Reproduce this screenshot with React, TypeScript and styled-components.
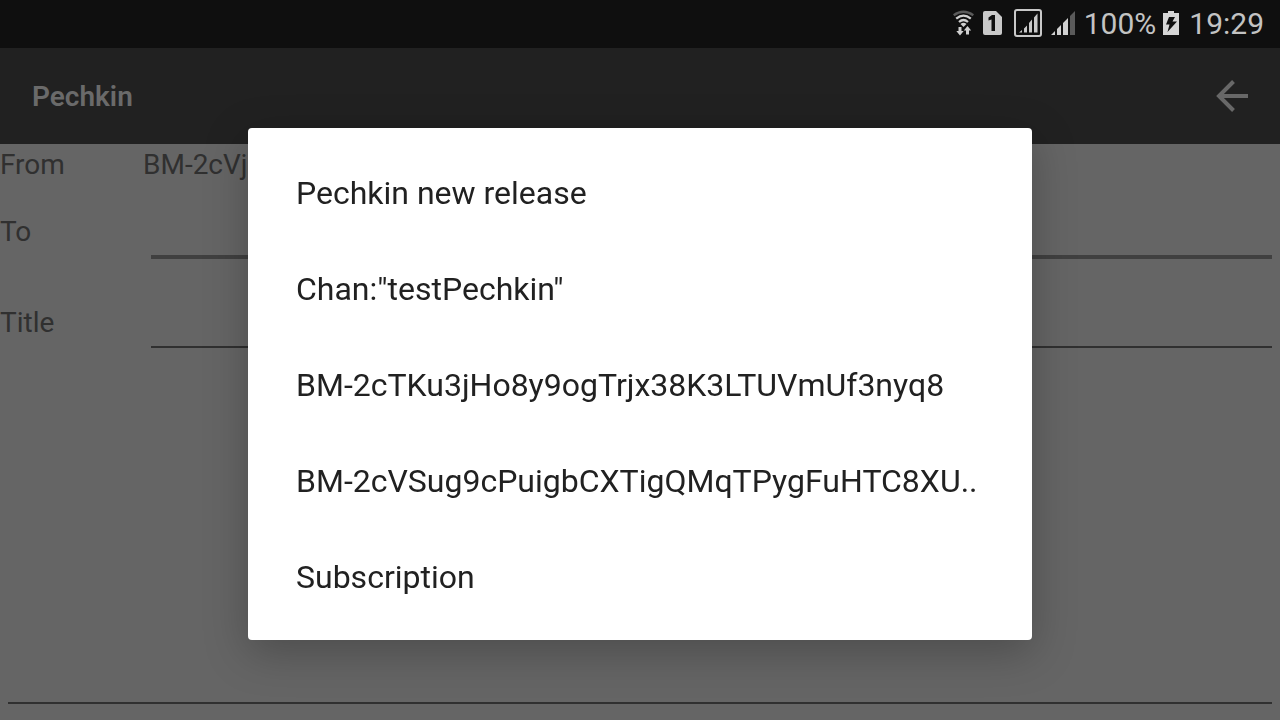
import React from "react";
import styled, { createGlobalStyle } from "styled-components";

const GlobalStyle = createGlobalStyle`
  * { box-sizing: border-box; }
  body { margin: 0; font-family: Roboto, sans-serif; background: #656565; }
`;

const Screen = styled.div`
  display: flex;
  flex-direction: column;
  min-height: 100vh;
`;

const StatusBar = styled.div`
  display: flex;
  align-items: center;
  justify-content: flex-end;
  height: 48px;
  padding: 0 16px 2px;
  background: #0f0f0f;
  color: #c3c3c3;
  font-size: 30px;
  line-height: 40px;
`;

const StatusIcon = styled.svg<{ $gap: number }>`
  flex: none;
  display: block;
  margin-right: ${(p) => p.$gap}px;
`;

const StatusText = styled.span<{ $gap?: number }>`
  margin-right: ${(p) => p.$gap ?? 0}px;
  padding-top: 2px;
`;

const Toolbar = styled.header`
  display: flex;
  align-items: center;
  justify-content: space-between;
  height: 96px;
  padding: 0 24px 0 32px;
  background: #212121;
`;

const Heading = styled.h1`
  margin: 0;
  padding-top: 2px;
  color: #6a6a6a;
  font-size: 28px;
  font-weight: 600;
  line-height: 40px;
`;

const BackButton = styled.button`
  display: flex;
  padding: 0;
  border: 0;
  background: none;
  cursor: pointer;
`;

const Form = styled.form`
  display: flex;
  flex: 1;
  flex-direction: column;
  color: #303030;
  font-size: 28px;
`;

const Row = styled.div`
  display: flex;
  align-items: center;
  height: 91px;
`;

const SenderRow = styled(Row)`
  height: 42px;
  padding-bottom: 2px;
`;

const Label = styled.label`
  flex: none;
  width: 143px;
`;

const LineInput = styled.input<{ $active?: boolean }>`
  flex: 1;
  align-self: stretch;
  min-width: 0;
  margin: 0 8px ${(p) => (p.$active ? 18 : 20)}px;
  padding: 0;
  border: 0;
  border-bottom: ${(p) => (p.$active ? "4px solid #404040" : "2px solid #303030")};
  outline: 0;
  background: none;
  color: inherit;
  font: inherit;
`;

const Message = styled.textarea`
  flex: 1;
  margin: 0 8px 16px;
  padding: 0;
  border: 0;
  border-bottom: 2px solid #303030;
  outline: 0;
  resize: none;
  background: none;
  color: inherit;
  font: inherit;
`;

const Overlay = styled.div`
  position: fixed;
  inset: 48px 0 0;
  display: flex;
  align-items: center;
  justify-content: center;
`;

const Dialog = styled.div`
  display: flex;
  flex-direction: column;
  width: 784px;
  max-width: calc(100% - 64px);
  padding: 16px 0;
  border-radius: 4px;
  background: #fff;
  box-shadow: 0 12px 44px rgba(0, 0, 0, 0.25);
`;

const Choice = styled.button`
  height: 96px;
  padding: 2px 48px 0;
  overflow: hidden;
  border: 0;
  background: none;
  color: #212121;
  font-family: inherit;
  font-size: 32px;
  line-height: 40px;
  text-align: left;
  white-space: nowrap;
  cursor: pointer;
`;

const choices = [
  "Pechkin new release",
  'Chan:"testPechkin"',
  "BM-2cTKu3jHo8y9ogTrjx38K3LTUVmUf3nyq8",
  "BM-2cVSug9cPuigbCXTigQMqTPygFuHTC8XU..",
  "Subscription",
];

const WifiIcon = () => (
  <StatusIcon $gap={9} width="21" height="26" viewBox="0 0 21 26" fill="none" aria-hidden="true">
    <path d="M.7 5.200Q10.500 -1.800 20.300 5.200" stroke="#5a5a5a" strokeWidth="2.400" />
    <path d="M3.200 8.700Q10.500 2.500 17.800 8.700M6 12Q10.500 8 15 12" stroke="#d0d0d0" strokeWidth="2.200" />
    <path d="M7.500 14Q10.500 11.500 13.500 14L10.500 17Z" fill="#d0d0d0" />
    <path d="M5.500 17h3v4h2.200L7 25.500l-3.700-4.500h2.200zM13 24.500h3v-4h2.200l-3.700-4.500-3.700 4.500H13z" fill="#d0d0d0" />
  </StatusIcon>
);

const SimIcon = () => (
  <StatusIcon $gap={12} width="19" height="24" viewBox="0 0 19 24" aria-hidden="true">
    <path d="M2 0h11l6 6v16a2 2 0 0 1-2 2H2a2 2 0 0 1-2-2V2a2 2 0 0 1 2-2z" fill="#c9c9c9" />
    <path d="M9 4h3v16H8.500V8.500L5.500 9.500V6.500z" fill="#0f0f0f" />
  </StatusIcon>
);

const BoxedSignalIcon = () => (
  <StatusIcon $gap={9} width="28" height="28" viewBox="0 0 28 28" aria-hidden="true">
    <rect x="1" y="1" width="26" height="26" rx="2" fill="none" stroke="#c9c9c9" strokeWidth="2" />
    <path d="M5 23.500L8 21v2.500zM10 19.500l3-3v7h-3zM15 14l3-3.500v13h-3zM20 8.500l3.500-4v19H20z" fill="#c9c9c9" />
  </StatusIcon>
);

const SignalIcon = () => (
  <StatusIcon $gap={9} width="24" height="24" viewBox="0 0 24 24" aria-hidden="true">
    <path d="M0 24l4-4v4zM6 18l4-4v10H6zM12 12l5-5v17h-5z" fill="#d0d0d0" />
    <path d="M19 5l5-5v24h-5z" fill="#5a5a5a" />
  </StatusIcon>
);

const BatteryIcon = () => (
  <StatusIcon $gap={10} width="16" height="24" viewBox="0 0 16 24" aria-hidden="true">
    <path d="M5 0h6v2h5v22H0V2h5z" fill="#d6d6d6" />
    <path d="M6 6h6l-2.500 4.500H14L4.500 21l2-7.500H3z" fill="#0f0f0f" />
  </StatusIcon>
);

export default function App() {
  return (
    <>
      <GlobalStyle />
      <Screen>
        <StatusBar>
          <WifiIcon />
          <SimIcon />
          <BoxedSignalIcon />
          <SignalIcon />
          <StatusText $gap={7}>100%</StatusText>
          <BatteryIcon />
          <StatusText>19:29</StatusText>
        </StatusBar>
        <Toolbar>
          <Heading>Pechkin</Heading>
          <BackButton type="button" aria-label="Back">
            <svg width="48" height="48" viewBox="0 0 48 48" fill="none" stroke="#686868" strokeWidth="4" aria-hidden="true">
              <path d="M40 24H11M25.500 9.500L11 24l14.500 14.500" />
            </svg>
          </BackButton>
        </Toolbar>
        <Form>
          <SenderRow>
            <Label htmlFor="from">From</Label>
            <output id="from">BM-2cVj</output>
          </SenderRow>
          <Row>
            <Label htmlFor="to">To</Label>
            <LineInput id="to" $active />
          </Row>
          <Row>
            <Label htmlFor="title">Title</Label>
            <LineInput id="title" />
          </Row>
          <Message aria-label="Message" />
        </Form>
      </Screen>
      <Overlay>
        <Dialog role="dialog" aria-label="Choose recipient">
          {choices.map((choice) => (
            <Choice key={choice} type="button">
              {choice}
            </Choice>
          ))}
        </Dialog>
      </Overlay>
    </>
  );
}
